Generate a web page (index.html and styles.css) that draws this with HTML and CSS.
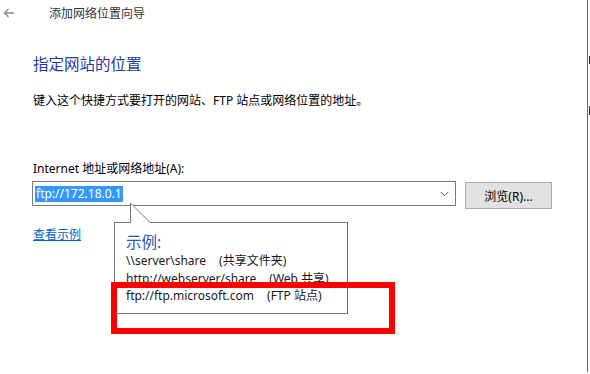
FILE: index.html
```html
<!DOCTYPE html>
<html lang="zh-CN">

<head>
  <meta charset="UTF-8" />
  <meta name="viewport" content="width=device-width, initial-scale=1.0" />
  <title>添加网络位置向导</title>
  <link rel="stylesheet" href="styles.css">
</head>

<body>
  <div class="window">
    <div class="title-bar">
      <span class="back-arrow">
        <svg width="12" height="10" viewBox="0 0 12 10">
          <path d="M11 5H1.5M5.5 1L1.5 5l4 4" fill="none" stroke="#8a8a8a" stroke-width="1.3" />
        </svg>
      </span>
      <span class="title">添加网络位置向导</span>
    </div>

    <div class="content">
      <h1 class="heading">指定网站的位置</h1>
      <p class="desc">键入这个快捷方式要打开的网站、FTP 站点或网络位置的地址。</p>

      <label class="field-label">Internet 地址或网络地址(A):</label>
      <div class="address-row">
        <div class="combo">
          <span class="selected">ftp://172.18.0.1</span>
          <svg class="chevron" width="9" height="6" viewBox="0 0 9 6">
            <path d="M0.5 0.8l4 4 4-4" fill="none" stroke="#555" stroke-width="1" />
          </svg>
        </div>
        <button class="browse">浏览(R)...</button>
      </div>

      <a class="examples-link" href="#">查看示例</a>
    </div>

    <div class="tooltip">
      <svg class="tip-pointer" width="22" height="22" viewBox="0 0 22 22">
        <path d="M1 21.5V0.5L21 20.5V21.5Z" fill="#fff" />
        <path d="M1.5 21V1L21 20.5" fill="none" stroke="#767676" stroke-width="1" />
      </svg>
      <div class="tip-title">示例:</div>
      <div class="tip-line">\\server\share<span class="tip-note">(共享文件夹)</span></div>
      <div class="tip-line">http://webserver/share<span class="tip-note">(Web 共享)</span></div>
      <div class="tip-line">ftp://ftp.microsoft.com<span class="tip-note">(FTP 站点)</span></div>
    </div>

    <div class="red-mark"></div>
  </div>

  <div class="edge-line">
    <span class="edge-bit bit-a"></span>
    <span class="edge-bit bit-b"></span>
  </div>
</body>

</html>
```

FILE: styles.css
```css
body {
  margin: 0;
  background-color: #fff;
  font-family: "Segoe UI", "Noto Sans", "Noto Sans CJK SC", sans-serif;
  font-size: 12px;
  color: #000;
}

.window {
  position: relative;
  width: 587px;
  height: 374px;
}

.title-bar {
  display: flex;
  align-items: center;
  height: 26px;
}

.back-arrow {
  display: flex;
  width: 46px;
  padding-left: 3px;
}

.title {
  color: #333;
  font-size: 12px;
}

.content {
  padding-left: 32px;
}

.heading {
  margin: 28px 0 0 1px;
  font-size: 15.5px;
  font-weight: normal;
  line-height: 20px;
  color: #1f3c9e;
}

.desc {
  margin: 19px 0 0 1px;
  line-height: 16px;
}

.field-label {
  display: block;
  margin: 52px 0 0 1px;
  line-height: 16px;
}

.address-row {
  display: flex;
  align-items: flex-start;
  gap: 9px;
  margin-top: 4px;
}

.combo {
  display: flex;
  align-items: center;
  justify-content: space-between;
  box-sizing: border-box;
  width: 424px;
  height: 25px;
  padding: 0 6px 0 2px;
  border: 1px solid #7a7a7a;
}

.selected {
  background-color: #3399ff;
  color: #fff;
  line-height: 16px;
  padding: 0 1px;
}

.browse {
  box-sizing: border-box;
  width: 87px;
  height: 27px;
  margin-top: 1px;
  background-color: #e1e1e1;
  border: 1px solid #adadad;
  font-family: inherit;
  font-size: 12px;
  color: #000;
}

.examples-link {
  display: inline-block;
  margin: 18px 0 0 1px;
  line-height: 16px;
  color: #0066cc;
}

.tooltip {
  position: absolute;
  left: 114px;
  top: 222px;
  box-sizing: border-box;
  width: 234px;
  height: 92px;
  padding: 9px 0 0 11px;
  border: 1px solid #767676;
  background-color: #fff;
}

.tip-pointer {
  position: absolute;
  left: 14px;
  top: -21px;
}

.tip-title {
  font-size: 15.5px;
  line-height: 20px;
  color: #2a55b5;
}

.tip-line {
  line-height: 17.5px;
  color: #1a1a1a;
}

.tip-note {
  margin-left: 13px;
}

.red-mark {
  position: absolute;
  left: 111px;
  top: 282px;
  box-sizing: border-box;
  width: 284px;
  height: 52px;
  border: 6px solid #ff0000;
}

.edge-line {
  position: absolute;
  left: 587px;
  top: 0;
  width: 3px;
  height: 372px;
  border-left: 1px solid #2a78cc;
}

.edge-bit {
  position: absolute;
  left: 1px;
  width: 2px;
  background-color: #333;
}

.bit-a {
  top: 56px;
  height: 8px;
}

.bit-b {
  top: 106px;
  height: 9px;
}
```
